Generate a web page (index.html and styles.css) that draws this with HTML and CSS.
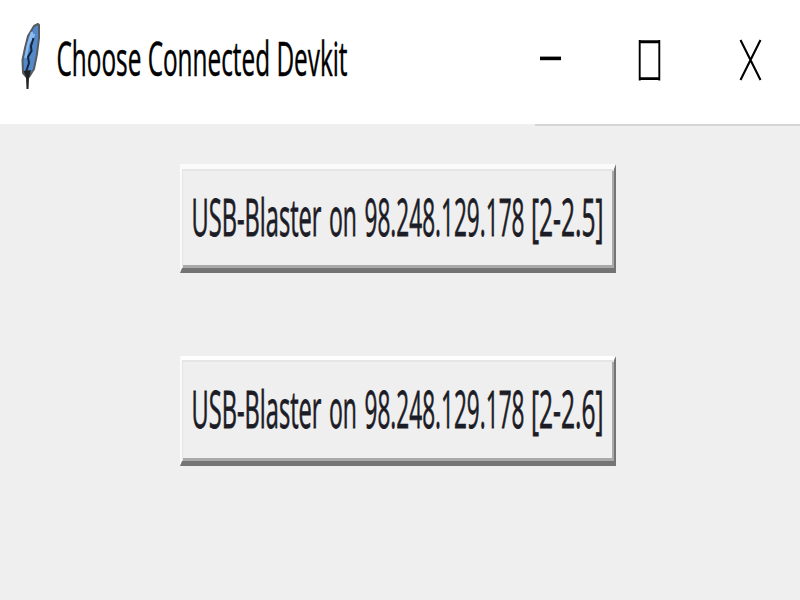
FILE: index.html
```html
<!DOCTYPE html>
<html lang="en">
<head>
<meta charset="utf-8">
<title>Choose Connected Devkit</title>
<link rel="stylesheet" href="styles.css">
</head>
<body>
<header class="titlebar">
  <svg class="feather" viewBox="0 0 24 72" aria-hidden="true">
    <path d="M19 4 L15 6 L9 16 L6 28 L3.5 40 L4 53 L7.5 57 L10 57 L15 49 L18 34 L20 18 L20 5 Z" fill="#5389cb" stroke="#555b61" stroke-width="2" stroke-linejoin="round"/>
    <path d="M13 12 L9 25 L6.5 38 M15 14 L12 22" fill="none" stroke="#8bbcf0" stroke-width="2.5"/>
    <path d="M14.5 18 L12 26 L12.5 31 L9 37 L10 43 L7 52" fill="none" stroke="#13253b" stroke-width="2"/>
    <path d="M4.5 51 L12 50 L10 58 L9.500 69 L7.500 69 L7 57 Z" fill="#222"/>
  </svg>
  <svg class="title" viewBox="0 0 300 70"><text x="0.5" y="25" transform="scale(1 2.1)" textLength="291" lengthAdjust="spacingAndGlyphs">Choose Connected Devkit</text></svg>
  <nav class="controls">
    <svg viewBox="0 0 24 44"><path d="M2 20.4H23" stroke-width="3.6"/></svg>
    <svg viewBox="0 0 24 44"><path d="M1.7 2V42.5M21.3 2V42.5" stroke-width="1.9"/><path d="M1 3.8H22M1 40.6H22" stroke-width="2.9"/></svg>
    <svg viewBox="0 0 24 44"><path d="M2.5 2L22.5 42M22.5 2L2.5 42" stroke-width="2.1"/></svg>
  </nav>
</header>
<main class="content">
  <button class="device">
    <svg viewBox="0 0 420 80">
      <g transform="scale(1 2.15)">
        <text x="0.5" y="24.8" textLength="130" lengthAdjust="spacingAndGlyphs">USB-Blaster</text>
        <text x="138" y="24.8" textLength="28" lengthAdjust="spacingAndGlyphs">on</text>
        <text x="173.5" y="24.8" textLength="160" lengthAdjust="spacingAndGlyphs">98.248.129.178</text>
        <text x="340" y="24.8" textLength="72.5" lengthAdjust="spacingAndGlyphs">[2-2.5]</text>
      </g>
    </svg>
  </button>
  <button class="device second">
    <svg viewBox="0 0 420 80">
      <g transform="scale(1 2.15)">
        <text x="0.5" y="24.8" textLength="130" lengthAdjust="spacingAndGlyphs">USB-Blaster</text>
        <text x="138" y="24.8" textLength="28" lengthAdjust="spacingAndGlyphs">on</text>
        <text x="173.5" y="24.8" textLength="160" lengthAdjust="spacingAndGlyphs">98.248.129.178</text>
        <text x="340" y="24.8" textLength="72.5" lengthAdjust="spacingAndGlyphs">[2-2.6]</text>
      </g>
    </svg>
  </button>
</main>
</body>
</html>
```
FILE: styles.css
```css
* { box-sizing: border-box; }
body {
  margin: 0;
  width: 800px;
  height: 600px;
  overflow: hidden;
  background: #efefef;
  font-family: "Open Sans", "Noto Sans", sans-serif;
}
.titlebar {
  display: flex;
  height: 124px;
  padding-top: 20px;
  background: #fff;
}
.feather {
  width: 24px;
  height: 72px;
  margin-left: 19px;
}
.title {
  width: 300px;
  height: 70px;
  margin: 4px 0 0 13px;
  overflow: visible;
}
.title text {
  font-size: 23px;
  fill: #000;
  stroke: #000;
  stroke-width: 0.25px;
}
.controls {
  display: flex;
  gap: 76px;
  align-items: flex-start;
  width: 265px;
  height: 106px;
  margin-left: auto;
  padding: 18px 0 0 3px;
  border-bottom: 2px solid #d5d5d5;
}
.controls svg {
  flex: none;
  width: 24px;
  height: 44px;
  fill: none;
  stroke: #000;
}
.content {
  display: flex;
  flex-direction: column;
  align-items: flex-start;
  gap: 83px;
  padding: 40px 0 0 180px;
}
.device {
  display: block;
  width: 436px;
  height: 109px;
  padding: 14px 0 5px 9px;
  background: #efefef;
  border-style: solid;
  border-width: 5px 2px 5px 2px;
  border-color: #fbfbfb #747474 #747474 #fbfbfb;
  box-shadow: inset 1px 2px #e5e5e5, inset -2px -3px #a9a9a9;
  font: inherit;
}
.second {
  height: 110px;
  padding: 15px 0 6px 9px;
  border-top-width: 4px;
  border-top-color: #fff;
}
.device svg {
  display: block;
  width: 420px;
  height: 80px;
  overflow: visible;
}
.device text {
  font-size: 24px;
  fill: #1c1c26;
  stroke: #1c1c26;
  stroke-width: 0.35px;
}
```
